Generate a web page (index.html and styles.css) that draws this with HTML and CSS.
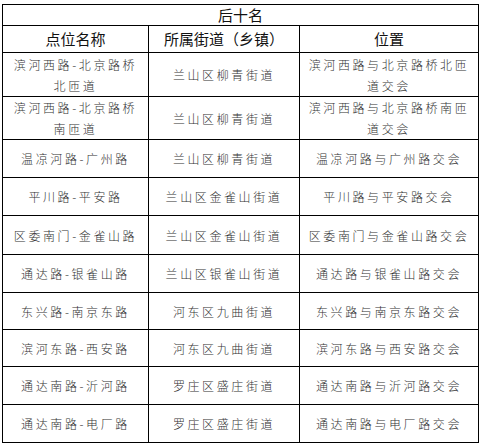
FILE: index.html
```html
<!DOCTYPE html>
<html lang="zh-CN">
<head>
<meta charset="utf-8">
<title>后十名</title>
<link rel="stylesheet" href="styles.css">
</head>
<body>
<div class="page">
<table class="rank">
  <colgroup>
    <col class="c1"><col class="c2"><col class="c3">
  </colgroup>
  <tr class="r-title"><td colspan="3" class="title">后十名</td></tr>
  <tr class="r-head"><th>点位名称</th><th>所属街道（乡镇）</th><th>位置</th></tr>
  <tr class="r-44"><td>滨河西路-北京路桥<br>北匝道</td><td>兰山区柳青街道</td><td>滨河西路与北京路桥北匝<br>道交会</td></tr>
  <tr class="r-42"><td>滨河西路-北京路桥<br>南匝道</td><td>兰山区柳青街道</td><td>滨河西路与北京路桥南匝<br>道交会</td></tr>
  <tr class="r-38"><td>温凉河路-广州路</td><td>兰山区柳青街道</td><td>温凉河路与广州路交会</td></tr>
  <tr class="r-38"><td>平川路-平安路</td><td>兰山区金雀山街道</td><td>平川路与平安路交会</td></tr>
  <tr class="r-39"><td>区委南门-金雀山路</td><td>兰山区金雀山街道</td><td>区委南门与金雀山路交会</td></tr>
  <tr class="r-38"><td>通达路-银雀山路</td><td>兰山区银雀山街道</td><td>通达路与银雀山路交会</td></tr>
  <tr class="r-37"><td>东兴路-南京东路</td><td>河东区九曲街道</td><td>东兴路与南京东路交会</td></tr>
  <tr class="r-37"><td>滨河东路-西安路</td><td>河东区九曲街道</td><td>滨河东路与西安路交会</td></tr>
  <tr class="r-38"><td>通达南路-沂河路</td><td>罗庄区盛庄街道</td><td>通达南路与沂河路交会</td></tr>
  <tr class="r-38"><td>通达南路-电厂路</td><td>罗庄区盛庄街道</td><td>通达南路与电厂路交会</td></tr>
</table>
<div class="scrollbit"></div>
</div>
</body>
</html>
```
FILE: styles.css
```css
html, body {
  margin: 0;
  padding: 0;
  background: #ffffff;
}
.page {
  padding: 4px 0 0 2px;
  height: 441px;
  position: relative;
}
.rank {
  border-collapse: collapse;
  table-layout: fixed;
  width: 476px;
  font-family: "Noto Sans CJK SC", "Noto Sans", sans-serif;
  color: #333333;
}
.c1 { width: 146px; }
.c2 { width: 151px; }
.c3 { width: 179px; }
.rank td, .rank th {
  border: 1px solid #000;
  text-align: center;
  vertical-align: middle;
  padding: 0 2px;
  font-size: 12px;
  letter-spacing: 2.6px;
  line-height: 21px;
  font-weight: 300;
  white-space: nowrap;
}
.rank th {
  font-size: 15px;
  letter-spacing: 0;
  color: #111;
  line-height: 20px;
  font-weight: 400;
}
.rank td.title {
  font-size: 15px;
  letter-spacing: 0;
  color: #111;
  line-height: 18px;
  font-weight: 400;
}
.r-title { height: 21px; }
.r-head { height: 27px; }
.r-44 { height: 44px; }
.r-42 { height: 42px; }
.r-39 { height: 39px; }
.r-38 { height: 38px; }
.r-37 { height: 37px; }
.scrollbit {
  position: absolute;
  left: 0;
  bottom: -4px;
  width: 14px;
  height: 2px;
  background: #b8b8b8;
}
```
